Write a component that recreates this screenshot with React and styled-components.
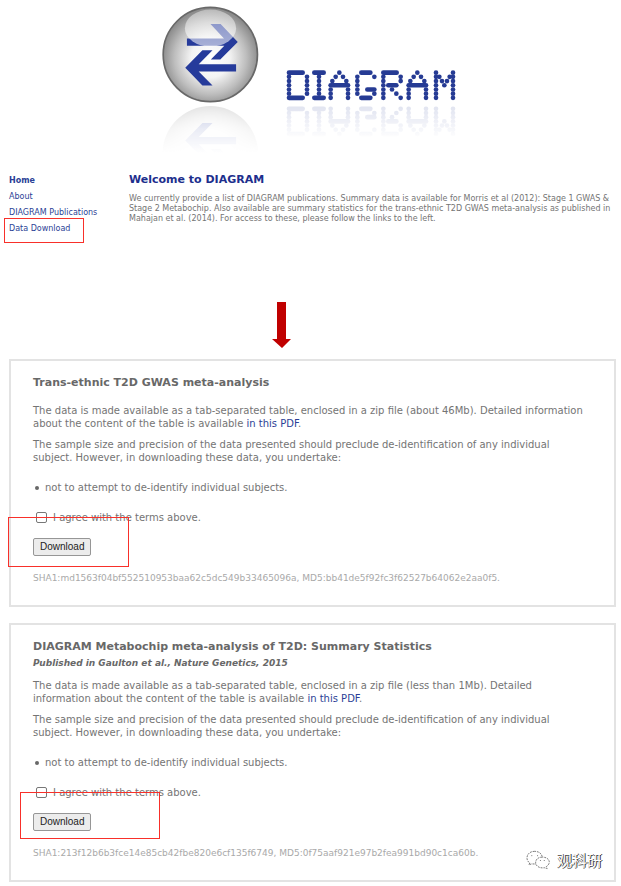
import React from "react";
import styled, { createGlobalStyle } from "styled-components";

const GlobalStyle = createGlobalStyle`
  *, *::before, *::after { box-sizing: border-box; }
  body {
    margin: 0;
    background: #fff;
    color: #747474;
    font-family: Verdana, "DejaVu Sans", sans-serif;
    font-size: 10px;
    line-height: 13px;
  }
  h1, h2, p, ul { margin: 0; padding: 0; }
  a { color: #2b3f96; text-decoration: none; }
`;

const Page = styled.div`
  position: relative;
  padding: 0 5px 4px 9px;
`;

const Header = styled.header`
  display: flex;
  align-items: flex-start;
  padding: 5px 0 0 152px;
  height: 173px;
`;

const Orb = styled.svg`
  flex: none;
  width: 99px;
  height: 152px;
`;

const Wordmark = styled.svg`
  flex: none;
  width: 176px;
  height: 70px;
  margin: 63px 0 0 24px;
`;

const Intro = styled.div`
  display: grid;
  grid-template-columns: 120px 1fr;
  min-height: 129px;
`;

const Nav = styled.nav`
  display: flex;
  flex-direction: column;
  align-items: flex-start;
`;

const NavLink = styled.a`
  position: relative;
  font-size: 8px;
  line-height: 16px;
  font-weight: ${(p) => (p.$current ? 700 : 400)};
  white-space: nowrap;
`;

const Welcome = styled.main`
  font-size: 8px;
  line-height: 10px;
`;

const WelcomeTitle = styled.h1`
  margin-bottom: 7px;
  color: #1d2f8d;
  font-size: 11px;
  line-height: 14px;
`;

const Step = styled.div`
  display: flex;
  padding-left: 263px;
  height: 57px;

  svg {
    width: 19px;
    height: 46px;
  }
`;

const Panels = styled.div`
  display: grid;
  gap: 16px;
`;

const Panel = styled.section`
  padding: 15px 24px 20px 22px;
  border: 2px solid #e3e3e3;
`;

const PanelTitle = styled.h2`
  color: #686868;
  font-size: 11px;
  line-height: 14px;
`;

const Source = styled.p`
  padding-top: 2px;
  color: #686868;
  font-size: 9px;
  font-weight: 700;
  font-style: italic;
  line-height: 14px;
`;

const Text = styled.p`
  margin-top: ${(p) => (p.$wide ? 14 : 9)}px;

  & + & { margin-top: 8px; }
`;

const Terms = styled.ul`
  margin-top: 17px;
  padding-left: 12px;
  list-style: none;

  li { position: relative; }
  li::before {
    content: "";
    position: absolute;
    top: 5px;
    left: -10px;
    width: 4px;
    height: 4px;
    border-radius: 50%;
    background: #686868;
  }
`;

const Consent = styled.form`
  position: relative;
  margin-top: 17px;
`;

const Agree = styled.label`
  display: flex;
  align-items: center;
  gap: 6px;
  padding-left: 3px;
  line-height: 14px;
`;

const Tick = styled.input`
  appearance: none;
  width: 11px;
  height: 11px;
  margin: 0 0 2px;
  border: 1px solid #777;
  border-radius: 2px;
  background: #fff;

  &:checked { background: #2b3f96; }
`;

const DownloadButton = styled.button`
  display: block;
  margin-top: 13px;
  padding: 0 6px;
  height: 18px;
  border: 1px solid #969696;
  border-radius: 2px;
  background: #ececec;
  color: #222;
  font: 10px/14px Arial, "Liberation Sans", sans-serif;
`;

const Checksum = styled.p`
  margin-top: 16px;
  color: #a9a9a9;
  font-size: 9px;
`;

const Mark = styled.span`
  position: absolute;
  border: 1px solid #f8302a;
  pointer-events: none;
`;

const NavMark = styled(Mark)`
  top: -3px;
  left: -5px;
  width: 80px;
  height: 25px;
`;

const FormMark = styled(Mark)`
  top: 6px;
  left: ${(p) => p.$left}px;
  width: ${(p) => p.$width}px;
  height: ${(p) => p.$height}px;
`;

const Watermark = styled.div`
  position: absolute;
  right: 19px;
  bottom: 16px;
  display: flex;
  align-items: center;
  gap: 6px;
  color: #fff;
  font: 15px/20px "Noto Sans CJK SC", sans-serif;
  text-shadow: 1px 0 0 #333, 0 1px 0 #666;

  svg { width: 25px; height: 20px; }
`;

function Arrows() {
  return (
    <g fill="#263b9b">
      <path d="M112 115H222L182 72H212L263 125L211 177H183L223 136H112Z" />
      <path d="M107 202L158 150H188L147 191H258V213H147L188 254H158Z" />
    </g>
  );
}

function OrbLogo() {
  return (
    <Orb viewBox="35 16 294 450" aria-hidden="true">
      <defs>
        <radialGradient id="metal" cx="50%" cy="54%" r="51%">
          <stop offset="0" stopColor="#fff" />
          <stop offset=".4" stopColor="#f4f4f4" />
          <stop offset=".75" stopColor="#bdbdbd" />
          <stop offset="1" stopColor="#8d8d8d" />
        </radialGradient>
        <linearGradient id="gloss" x1="0" y1="0" x2="0" y2="1">
          <stop offset="0" stopColor="#fff" stopOpacity=".4" />
          <stop offset="1" stopColor="#fff" stopOpacity=".6" />
        </linearGradient>
        <linearGradient id="orbFade" gradientUnits="userSpaceOnUse" x1="0" y1="310" x2="0" y2="455">
          <stop offset="0" stopColor="#fff" stopOpacity=".3" />
          <stop offset=".5" stopColor="#fff" stopOpacity=".1" />
          <stop offset="1" stopColor="#fff" stopOpacity="0" />
        </linearGradient>
        <mask id="orbMask" maskUnits="userSpaceOnUse" x="30" y="310" width="310" height="156">
          <rect x="30" y="310" width="310" height="156" fill="url(#orbFade)" />
        </mask>
      </defs>
      <circle cx="181.500" cy="162.500" r="140" fill="url(#metal)" stroke="#686868" strokeWidth="5" />
      <Arrows />
      <ellipse cx="182" cy="84" rx="76" ry="55" fill="url(#gloss)" />
      <g mask="url(#orbMask)">
        <g transform="translate(0 620) scale(1 -1)">
          <circle cx="181.500" cy="162.500" r="142" fill="url(#metal)" />
          <Arrows />
        </g>
      </g>
    </Orb>
  );
}

// Lamp runs of the wordmark: [row, first x, last x].
const lamps = [
  [0, 57, 98], [6, 57, 98], ...column(57, 1, 5), ...column(111, 1, 5),
  [0, 133, 161], [6, 133, 161], ...column(147, 1, 5),
  [0, 208, 208], [1, 197, 197], [1, 219, 219], [2, 187, 187], [2, 229, 229],
  [3, 182, 234], ...column(182, 4, 6), ...column(234, 4, 6),
  [0, 274, 301], [6, 274, 301], ...column(262, 1, 5), [1, 313, 313],
  [4, 292, 313], [5, 313, 313],
  [0, 340, 380], ...column(340, 1, 6), ...column(392, 1, 2),
  [3, 355, 379], [4, 366, 366], [5, 379, 379], [6, 392, 392],
  [0, 442, 442], [1, 431, 431], [1, 453, 453], [2, 421, 421], [2, 463, 463],
  [3, 416, 468], ...column(416, 4, 6), ...column(468, 4, 6),
  ...column(498, 0, 6), ...column(549, 0, 6),
  [1, 508, 508], [1, 539, 539], [2, 516, 516], [2, 531, 531], [3, 523, 523],
];

function column(x, from, to) {
  const runs = [];
  for (let row = from; row <= to; row += 1) runs.push([row, x, x]);
  return runs;
}

function Lamps() {
  return (
    <g stroke="#263b94" strokeWidth="14" strokeLinecap="round">
      {lamps.map(([row, a, b]) => (
        <path key={`${row}-${a}`} d={`M${a} ${68 + row * 12.6}H${b + 0.01}`} />
      ))}
    </g>
  );
}

function WordmarkLogo() {
  return (
    <Wordmark viewBox="42 54 528 210" role="img" aria-label="DIAGRAM">
      <defs>
        <linearGradient id="wordFade" gradientUnits="userSpaceOnUse" x1="0" y1="168" x2="0" y2="262">
          <stop offset="0" stopColor="#fff" stopOpacity=".14" />
          <stop offset="1" stopColor="#fff" stopOpacity=".01" />
        </linearGradient>
        <mask id="wordMask" maskUnits="userSpaceOnUse" x="40" y="165" width="530" height="100">
          <rect x="40" y="165" width="530" height="100" fill="url(#wordFade)" />
        </mask>
      </defs>
      <Lamps />
      <g mask="url(#wordMask)">
        <g transform="translate(0 320) scale(1 -1)">
          <Lamps />
        </g>
      </g>
    </Wordmark>
  );
}

function DownloadPanel({ title, source, size, checksum, mark }) {
  return (
    <Panel>
      <PanelTitle>{title}</PanelTitle>
      {source && <Source>{source}</Source>}
      <Text $wide={!source}>
        The data is made available as a tab-separated table, enclosed in a zip file ({size}). Detailed
        information about the content of the table is available <a href="#pdf">in this PDF</a>.
      </Text>
      <Text>
        The sample size and precision of the data presented should preclude de-identification of any
        individual subject. However, in downloading these data, you undertake:
      </Text>
      <Terms>
        <li>not to attempt to de-identify individual subjects.</li>
      </Terms>
      <Consent onSubmit={(e) => e.preventDefault()}>
        <Agree>
          <Tick type="checkbox" />
          I agree with the terms above.
        </Agree>
        <DownloadButton type="submit">Download</DownloadButton>
        <FormMark $left={mark.left} $width={mark.width} $height={mark.height} />
      </Consent>
      <Checksum>{checksum}</Checksum>
    </Panel>
  );
}

export default function App() {
  return (
    <Page>
      <GlobalStyle />
      <Header>
        <OrbLogo />
        <WordmarkLogo />
      </Header>
      <Intro>
        <Nav>
          <NavLink href="#home" $current>Home</NavLink>
          <NavLink href="#about">About</NavLink>
          <NavLink href="#publications">DIAGRAM Publications</NavLink>
          <NavLink href="#download">
            Data Download
            <NavMark />
          </NavLink>
        </Nav>
        <Welcome>
          <WelcomeTitle>Welcome to DIAGRAM</WelcomeTitle>
          <p>
            We currently provide a list of DIAGRAM publications. Summary data is available for Morris
            et al (2012): Stage 1 GWAS &amp; Stage 2 Metabochip. Also available are summary statistics
            for the trans-ethnic T2D GWAS meta-analysis as published in Mahajan et al. (2014). For
            access to these, please follow the links to the left.
          </p>
        </Welcome>
      </Intro>
      <Step>
        <svg viewBox="0 0 19 46" aria-hidden="true">
          <path d="M5 0H14V37H19L10 46L0 37H5Z" fill="#c00000" />
        </svg>
      </Step>
      <Panels>
        <DownloadPanel
          title="Trans-ethnic T2D GWAS meta-analysis"
          size="about 46Mb"
          checksum="SHA1:md1563f04bf552510953baa62c5dc549b33465096a, MD5:bb41de5f92fc3f62527b64062e2aa0f5."
          mark={{ left: -25, width: 121, height: 50 }}
        />
        <DownloadPanel
          title="DIAGRAM Metabochip meta-analysis of T2D: Summary Statistics"
          source="Published in Gaulton et al., Nature Genetics, 2015"
          size="less than 1Mb"
          checksum="SHA1:213f12b6b3fce14e85cb42fbe820e6cf135f6749, MD5:0f75aaf921e97b2fea991bd90c1ca60b."
          mark={{ left: -13, width: 140, height: 47 }}
        />
      </Panels>
      <Watermark>
        <svg viewBox="0 0 26 20" fill="#fff" stroke="#777" strokeWidth="1" strokeDasharray="2 1" aria-hidden="true">
          <path d="M9 1C4 1 1 4 1 8c0 2 1 4 3 5l-1 2 3-1c8 1 11-3 11-6 0-4-3-7-8-7Z" />
          <path d="M17 7c-4 0-7 2-7 6 0 3 4 6 9 5l3 1-1-2c6-4 3-10-4-10Z" />
          <path d="M6 5v1M12 5v1M15 10v1M19 10v1" />
        </svg>
        观科研
      </Watermark>
    </Page>
  );
}
